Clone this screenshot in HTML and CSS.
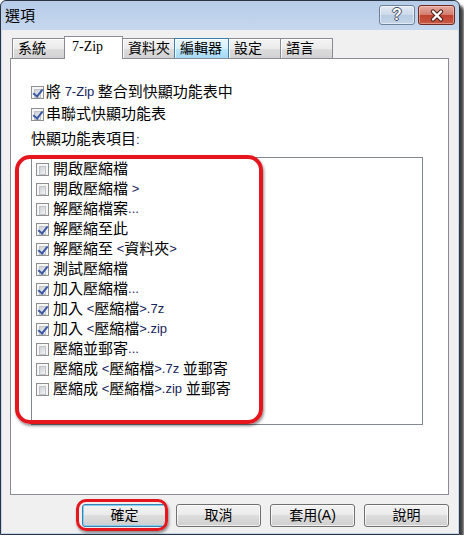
FILE: index.html
```html
<!DOCTYPE html>
<html lang="zh-Hant">
<head>
    <meta charset="UTF-8">
    <meta name="viewport" content="width=device-width, initial-scale=1.0">
    <title>選項</title>
    <link rel="stylesheet" href="styles.css">
</head>
<body>
    <div class="window">
        <div class="titlebar">
            <span class="title">選項</span>
            <div class="caption-btns">
                <span class="cap-btn help">?</span>
                <span class="cap-btn close">
                    <svg width="16" height="13" viewBox="0 0 16 13">
                        <path d="M4 2.5 L12 10.5 M12 2.5 L4 10.5" stroke="#4a1c15" stroke-width="4.2" stroke-linecap="round"/>
                        <path d="M4 2.5 L12 10.5 M12 2.5 L4 10.5" stroke="#fff" stroke-width="2.4" stroke-linecap="round"/>
                    </svg>
                </span>
            </div>
        </div>

        <div class="client">
            <!-- Tab strip -->
            <div class="tabs">
                <span class="tab">系統</span>
                <span class="tab on">7-Zip</span>
                <span class="tab">資料夾</span>
                <span class="tab hot">編輯器</span>
                <span class="tab">設定</span>
                <span class="tab">語言</span>
            </div>

            <div class="panel">
                <div class="opt"><span class="cb on"></span>將<span class="en">&nbsp;7-Zip&nbsp;</span>整合到快顯功能表中</div>
                <div class="opt"><span class="cb on"></span>串聯式快顯功能表</div>
                <div class="caption">快顯功能表項目<span class="en">:</span></div>

                <div class="listbox">
                    <div class="item"><span class="cb"></span>開啟壓縮檔</div>
                    <div class="item"><span class="cb"></span>開啟壓縮檔<span class="en">&nbsp;&gt;</span></div>
                    <div class="item"><span class="cb"></span>解壓縮檔案<span class="en">...</span></div>
                    <div class="item"><span class="cb on"></span>解壓縮至此</div>
                    <div class="item"><span class="cb on"></span>解壓縮至<span class="en">&nbsp;&lt;</span>資料夾<span class="en">&gt;</span></div>
                    <div class="item"><span class="cb on"></span>測試壓縮檔</div>
                    <div class="item"><span class="cb on"></span>加入壓縮檔<span class="en">...</span></div>
                    <div class="item"><span class="cb on"></span>加入<span class="en">&nbsp;&lt;</span>壓縮檔<span class="en">&gt;.7z</span></div>
                    <div class="item"><span class="cb on"></span>加入<span class="en">&nbsp;&lt;</span>壓縮檔<span class="en">&gt;.zip</span></div>
                    <div class="item"><span class="cb"></span>壓縮並郵寄<span class="en">...</span></div>
                    <div class="item"><span class="cb"></span>壓縮成<span class="en">&nbsp;&lt;</span>壓縮檔<span class="en">&gt;.7z&nbsp;</span>並郵寄</div>
                    <div class="item"><span class="cb"></span>壓縮成<span class="en">&nbsp;&lt;</span>壓縮檔<span class="en">&gt;.zip&nbsp;</span>並郵寄</div>
                </div>
            </div>

            <div class="buttons">
                <span class="btn default">確定</span>
                <span class="btn">取消</span>
                <span class="btn">套用(A)</span>
                <span class="btn">說明</span>
            </div>
        </div>

        <!-- Red highlight marks -->
        <div class="mark mark-list"></div>
        <div class="mark mark-ok"></div>
    </div>
</body>
</html>
```

FILE: styles.css
```css
/* General styles */
* {
    margin: 0;
    padding: 0;
    box-sizing: border-box;
}

body {
    background: #fff;
    font-family: "Liberation Sans", "Noto Sans CJK TC", sans-serif;
    color: #000;
}

.en {
    font-size: 13px;
    color: #18245c;
}

/* Window frame */
.window {
    position: relative;
    width: 460px;
    height: 535px;
    border: 1px solid #2b3542;
    border-radius: 6px 6px 0 0;
    background: linear-gradient(#b7cce8, #c6d8ee 30px, #c2d5ec);
    box-shadow: 4px 5px 3px rgba(0, 0, 0, 0.75);
    display: flex;
    flex-direction: column;
}

.titlebar {
    height: 29px;
    display: flex;
    justify-content: space-between;
    align-items: flex-start;
    padding: 0 4px 0 4px;
}

.title {
    font-size: 15px;
    line-height: 29px;
}

.caption-btns {
    display: flex;
    gap: 3px;
    margin-top: 4px;
}

.cap-btn {
    width: 36px;
    height: 20px;
    border: 1px solid #6f8198;
    border-radius: 3px;
    display: flex;
    align-items: center;
    justify-content: center;
}

.help {
    background: linear-gradient(#e2eaf4, #ccd9ea 50%, #b9cbe2 50%, #c3d4e8);
    box-shadow: inset 0 0 0 1px rgba(255, 255, 255, 0.5);
    font-weight: bold;
    font-size: 16px;
    color: #fff;
    text-shadow: 1px 0 #3e4c5e, -1px 0 #3e4c5e, 0 1px #3e4c5e, 0 -1px #3e4c5e;
}

.close {
    width: 37px;
    border-color: #6c2a20;
    background: linear-gradient(#e5aaa0, #d27b6c 50%, #c0412e 50%, #c85a44);
    box-shadow: inset 0 0 0 1px rgba(255, 220, 210, 0.45);
}

/* Client area */
.client {
    flex: 1;
    margin: 0 1px 1px 1px;
    background: #f0f0f0;
    padding: 6px 9px 0 8px;
}

.tabs {
    display: flex;
    align-items: flex-end;
    height: 22px;
    padding-left: 2px;
}

.tab {
    width: 53px;
    height: 20px;
    margin-right: -1px;
    padding-left: 5px;
    border: 1px solid #898c95;
    border-bottom: none;
    background: linear-gradient(#f3f3f3, #ebebeb 50%, #dddddd 50%, #d2d2d2);
    box-shadow: inset 1px 1px 0 rgba(255, 255, 255, 0.8);
    font-size: 14px;
    line-height: 19px;
}

.tab.on {
    width: 59px;
    height: 23px;
    margin-bottom: -1px;
    padding-left: 7px;
    position: relative;
    z-index: 1;
    background: #fff;
    box-shadow: none;
    font-family: "Liberation Serif", "Noto Sans CJK TC", serif;
    line-height: 20px;
}

.tab.hot {
    width: 55px;
    position: relative;
    border-color: #3c7fb1;
    background: linear-gradient(#eaf6fd, #d9f0fc 50%, #bee6fd 50%, #a7d9f5);
}

.panel {
    height: 437px;
    border: 1px solid #898c95;
    background: #fff;
    padding: 22px 0 0 20px;
}

.opt {
    display: flex;
    align-items: center;
    height: 22px;
    font-size: 15px;
    line-height: 22px;
}

.opt .cb {
    margin-right: 2px;
}

.caption {
    font-size: 15px;
    line-height: 22px;
    margin-top: 3px;
}

.listbox {
    width: 392px;
    height: 268px;
    margin-top: 6px;
    border: 1px solid #828790;
    padding: 1px 0 0 4px;
}

.item {
    display: flex;
    align-items: center;
    height: 20px;
    font-size: 15px;
    line-height: 20px;
}

.item .cb {
    margin-right: 4px;
}

/* Checkbox */
.cb {
    position: relative;
    flex: none;
    width: 13px;
    height: 13px;
    border: 1px solid #8e8f8f;
    background: #f6f6f6;
    padding: 2px;
}

.cb::before {
    content: '';
    display: block;
    height: 100%;
    border: 1px solid #bfc3c8;
    background: linear-gradient(135deg, #cbcfd5, #f4f4f4);
}

.cb.on::after {
    content: '';
    position: absolute;
    left: 3px;
    top: 0;
    width: 4px;
    height: 8px;
    border: solid #3a58a4;
    border-width: 0 2px 2px 0;
    transform: rotate(38deg);
}

/* Dialog buttons */
.buttons {
    display: flex;
    justify-content: flex-end;
    gap: 9px;
    margin-top: 9px;
}

.btn {
    width: 85px;
    height: 23px;
    border: 1px solid #707070;
    border-radius: 3px;
    background: linear-gradient(#f2f2f2, #ebebeb 50%, #dddddd 50%, #cfcfcf);
    box-shadow: inset 0 0 0 1px rgba(255, 255, 255, 0.7);
    font-size: 14px;
    line-height: 21px;
    text-align: center;
}

.btn.default {
    border-color: #3c7fb1;
    box-shadow: inset 0 0 0 1px #7fd2f3;
}

/* Red annotation marks */
.mark {
    position: absolute;
    border: 4px solid #e5161e;
    box-shadow: 1px 2px 3px rgba(0, 0, 0, 0.45);
}

.mark-list {
    left: 14px;
    top: 154px;
    width: 248px;
    height: 269px;
    border-radius: 15px;
}

.mark-ok {
    left: 75px;
    top: 498px;
    width: 92px;
    height: 32px;
    border-width: 3.5px;
    border-radius: 10px;
}
```
